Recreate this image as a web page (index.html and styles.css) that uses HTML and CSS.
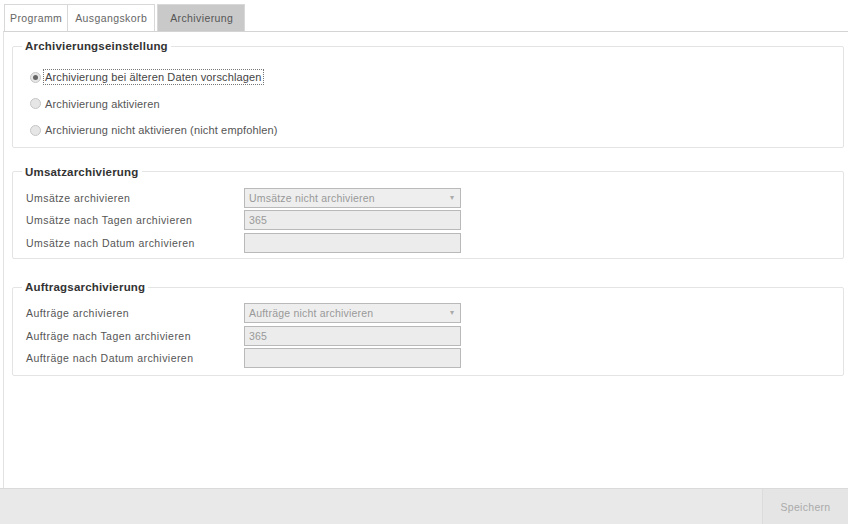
FILE: index.html
```
<!DOCTYPE html>
<html lang="de">
<head>
    <meta charset="UTF-8">
    <link rel="stylesheet" href="styles.css">
    <title>Archivierung</title>
</head>
<body>
<div class="window">
    <div class="tabs">
        <div class="tab">Programm</div>
        <div class="tab">Ausgangskorb</div>
        <div class="tab active">Archivierung</div>
    </div>

    <div class="panel">
        <fieldset class="group group-radios">
            <legend>Archivierungseinstellung</legend>
            <label class="radio-row"><span class="radio checked"></span><span class="focus">Archivierung bei älteren Daten vorschlagen</span></label>
            <label class="radio-row"><span class="radio"></span><span>Archivierung aktivieren</span></label>
            <label class="radio-row"><span class="radio"></span><span>Archivierung nicht aktivieren (nicht empfohlen)</span></label>
        </fieldset>

        <fieldset class="group group-sales">
            <legend>Umsatzarchivierung</legend>
            <div class="field-row">
                <span class="label">Umsätze archivieren</span>
                <div class="field select">Umsätze nicht archivieren<span class="caret">&#9662;</span></div>
            </div>
            <div class="field-row">
                <span class="label">Umsätze nach Tagen archivieren</span>
                <div class="field">365</div>
            </div>
            <div class="field-row">
                <span class="label">Umsätze nach Datum archivieren</span>
                <div class="field"></div>
            </div>
        </fieldset>

        <fieldset class="group group-orders">
            <legend>Auftragsarchivierung</legend>
            <div class="field-row">
                <span class="label">Aufträge archivieren</span>
                <div class="field select">Aufträge nicht archivieren<span class="caret">&#9662;</span></div>
            </div>
            <div class="field-row">
                <span class="label">Aufträge nach Tagen archivieren</span>
                <div class="field">365</div>
            </div>
            <div class="field-row">
                <span class="label">Aufträge nach Datum archivieren</span>
                <div class="field"></div>
            </div>
        </fieldset>
    </div>

    <div class="footer">
        <button class="save-button" disabled>Speichern</button>
    </div>
</div>
</body>
</html>
```

FILE: styles.css
```
body {
    margin: 0;
    font-family: "Liberation Sans", Arial, sans-serif;
    font-size: 11px;
    color: #444;
    background: #fff;
}
.window {
    display: flex;
    flex-direction: column;
    height: 524px;
}
.tabs {
    display: flex;
    padding: 4px 0 0 4px;
    height: 31px;
    box-sizing: border-box;
}
.tab {
    padding: 0 7px;
    line-height: 26px;
    border: 1px solid #d8d8d8;
    border-bottom: none;
    color: #666;
    font-size: 10.5px;
    letter-spacing: 0.4px;
}
.tab:first-child {
    padding: 0 5px;
}
.tab + .tab {
    border-left: none;
}
.tab.active {
    background: #c9c9c9;
    color: #555;
    margin-left: 2px;
    padding: 0 11px 0 12px;
    border-left: 1px solid #d8d8d8;
}
.panel {
    flex: 1;
    margin-left: 3px;
    border-top: 1px solid #d4d4d4;
    border-left: 1px solid #e2e2e2;
    padding: 8px 4px 0 8px;
}
.group {
    border: 1px solid #e4e4e4;
    border-radius: 2px;
    margin: 0 0 28px 0;
    padding: 9px 0 4px 13px;
}
.group legend {
    font-weight: bold;
    font-size: 11.5px;
    letter-spacing: 0.2px;
    color: #333;
    padding: 0 3px;
    margin-left: -4px;
}
.group-radios {
    padding: 12px 0 3px 17px;
    margin-bottom: 18px;
}
.group-radios legend {
    margin-left: -8px;
}
.group-sales {
    margin-bottom: 22px;
}
.group-orders {
    padding-bottom: 5px;
}
.radio-row {
    display: flex;
    align-items: center;
    gap: 4px;
    height: 26.5px;
    color: #555;
    letter-spacing: 0.15px;
}
.radio {
    width: 9px;
    height: 9px;
    border-radius: 50%;
    border: 1px solid #c6c6c6;
    background: #e6e6e6;
    position: relative;
}
.radio.checked::after {
    content: "";
    position: absolute;
    left: 2px;
    top: 2px;
    width: 5px;
    height: 5px;
    border-radius: 50%;
    background: #666;
}
.focus {
    outline: 1px dotted #777;
    outline-offset: 1px;
    color: #444;
}
.field-row {
    display: flex;
    align-items: center;
    height: 22.5px;
}
.label {
    width: 218px;
    font-size: 10.5px;
    letter-spacing: 0.45px;
    color: #555;
}
.field {
    width: 207px;
    height: 18px;
    line-height: 18px;
    padding: 0 4px;
    border: 1px solid #b9b9b9;
    background: #ececec;
    color: #999;
    font-size: 10.5px;
    letter-spacing: 0.2px;
    position: relative;
}
.field.select {
    background: #eeeeee;
}
.caret {
    position: absolute;
    right: 6px;
    top: 0;
    font-size: 8px;
    color: #aaa;
}
.footer {
    height: 35px;
    background: #e9e9e9;
    border-top: 1px solid #dadada;
    display: flex;
    justify-content: flex-end;
}
.save-button {
    width: 86px;
    border: none;
    border-left: 1px solid #dcdcdc;
    background: #e5e5e5;
    font-family: "Liberation Sans", Arial, sans-serif;
    font-size: 10.5px;
    letter-spacing: 0.3px;
    color: #aaa;
}
```
